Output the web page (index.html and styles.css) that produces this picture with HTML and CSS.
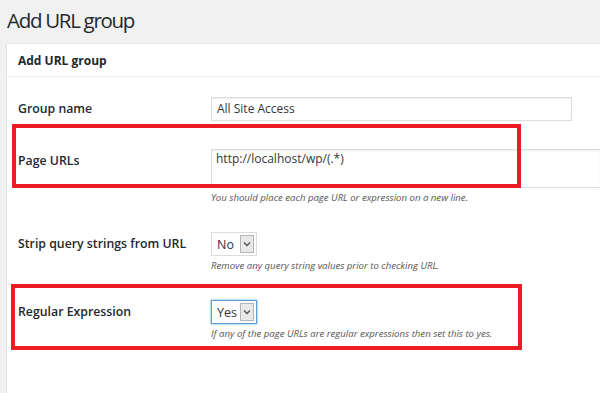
FILE: index.html
```html
<!DOCTYPE html>
<html lang="en">
<head>
<meta charset="UTF-8">
<title>Add URL group</title>
<link rel="stylesheet" href="styles.css">
</head>
<body>
<h1>Add URL group</h1>

<div class="panel">
  <div class="panel-head">Add URL group</div>
  <div class="panel-body">

    <div class="row first">
      <div class="label">Group name</div>
      <div class="field">
        <div class="input">All Site Access</div>
      </div>
    </div>

    <div class="row">
      <div class="label">Page URLs</div>
      <div class="field">
        <div class="textarea">http://localhost/wp/(.*)</div>
        <p class="desc">You should place each page URL or expression on a new line.</p>
      </div>
    </div>

    <div class="row">
      <div class="label">Strip query strings from URL</div>
      <div class="field">
        <div class="select">
          <span class="select-text">No</span>
          <span class="select-btn"><svg width="8" height="6" viewBox="0 0 8 6"><path d="M1 1.5 L4 4.5 L7 1.5" fill="none" stroke="#555" stroke-width="1.4"/></svg></span>
        </div>
        <p class="desc">Remove any query string values prior to checking URL.</p>
      </div>
    </div>

    <div class="row">
      <div class="label">Regular Expression</div>
      <div class="field">
        <div class="select focus">
          <span class="select-text">Yes</span>
          <span class="select-btn"><svg width="8" height="6" viewBox="0 0 8 6"><path d="M1 1.5 L4 4.5 L7 1.5" fill="none" stroke="#555" stroke-width="1.4"/></svg></span>
        </div>
        <p class="desc">If any of the page URLs are regular expressions then set this to yes.</p>
      </div>
    </div>

  </div>
</div>

<!-- annotation boxes drawn over the form -->
<div class="mark mark-urls"></div>
<div class="mark mark-regex"></div>
</body>
</html>
```

FILE: styles.css
```css
body { margin:0; background:#f1f1f1; font-family:"Open Sans", "DejaVu Sans", sans-serif; color:#23282d; overflow:hidden; height:393px; position:relative; display:flex; flex-direction:column; }
h1 { margin:0; padding:5px 0 0 7px; height:43px; flex:none; box-sizing:border-box; font-size:20.5px; font-weight:400; letter-spacing:-1.3px; line-height:30px; color:#23282d; }
.panel { flex:1; margin-left:6px; background:#fff; border-left:1px solid #e5e5e5; border-top:1px solid #e5e5e5; }
.panel-head { height:32px; line-height:33px; padding-left:11px; font-size:12px; font-weight:700; color:#23282d; border-bottom:1px solid #eee; }
.panel-body { padding-left:11px; }
.row { display:flex; padding:14px 0; }
.row.first { padding-top:20px; }
.label { width:193px; flex:none; font-size:12.3px; font-weight:600; line-height:24px; color:#23282d; }
.field { flex:1; }
.input { width:354px; height:22px; border:1px solid #ddd; font-size:12px; line-height:22px; padding-left:5px; color:#32373c; box-shadow:inset 0 1px 2px rgba(0,0,0,.07); }
.textarea { height:37px; border:1px solid #ddd; border-right:none; font-size:12px; line-height:18px; padding:0 0 0 4px; color:#32373c; box-shadow:inset 0 1px 2px rgba(0,0,0,.07); }
.desc { margin:4px 0 0; font-size:9.6px; font-style:italic; line-height:12px; color:#555; }
.select { display:flex; align-items:center; justify-content:space-between; width:37px; height:22px; border:1px solid #ddd; padding:0 2px 0 5px; box-sizing:content-box; font-size:12.5px; color:#32373c; background:#fff; }
.select.focus { border-color:#5b9dd9; box-shadow:0 0 2px rgba(30,140,190,.8); }
.select-btn { display:flex; align-items:center; justify-content:center; width:14px; height:18px; background:#e8e8e8; border:1px solid #b5b5b5; box-sizing:border-box; }
.mark { position:absolute; border:4px solid #ed1c24; box-sizing:border-box; }
.mark-urls { left:12px; top:124px; width:509px; height:64px; }
.mark-regex { left:11px; top:284px; width:511px; height:66px; }
```
